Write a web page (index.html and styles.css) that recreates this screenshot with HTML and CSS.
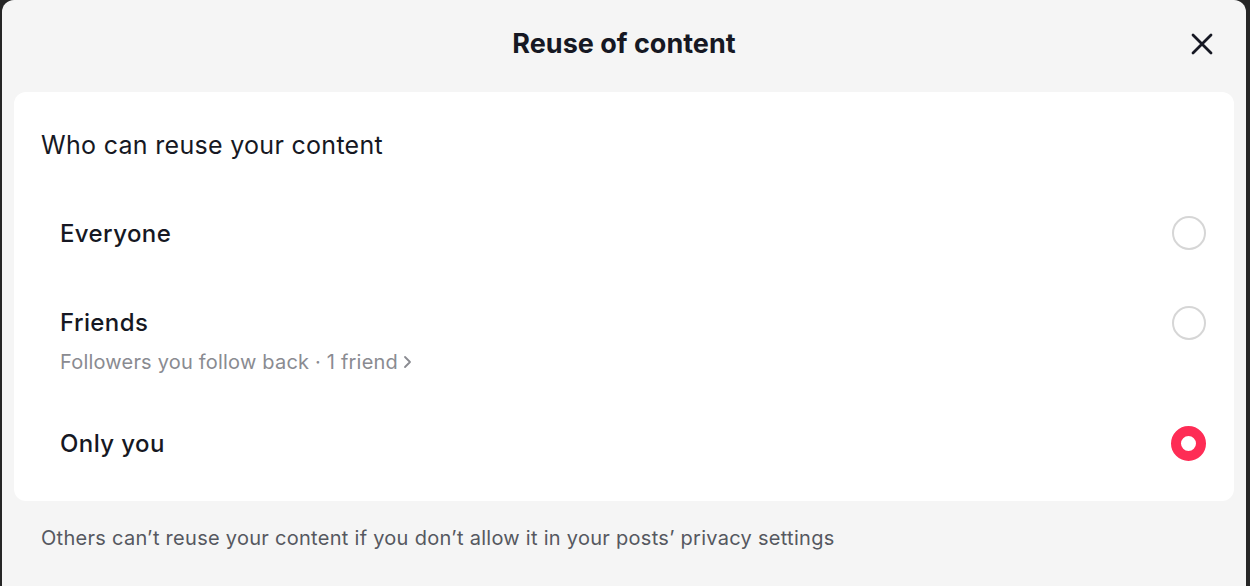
FILE: index.html
```html
<!DOCTYPE html>
<html lang="en">
<head>
<meta charset="utf-8">
<title>Reuse of content</title>
<link rel="stylesheet" href="styles.css">
</head>
<body>
<div class="modal">
  <header class="modal-header">
    <span class="spacer"></span>
    <h1 class="modal-title">Reuse of content</h1>
    <button class="close-btn" aria-label="Close">
      <svg width="22" height="22" viewBox="0 0 22 22" fill="none" stroke="#161823" stroke-width="2.8" stroke-linecap="round">
        <path d="M2 2 L20 20 M20 2 L2 20"/>
      </svg>
    </button>
  </header>
  <section class="card">
    <h2 class="card-heading">Who can reuse your content</h2>
    <div class="option">
      <div class="option-text">
        <div class="option-title">Everyone</div>
      </div>
      <span class="radio"></span>
    </div>
    <div class="option option-sub">
      <div class="option-text">
        <div class="option-title">Friends</div>
        <div class="option-desc">Followers you follow back · 1 friend <svg class="chev" width="9" height="14" viewBox="0 0 9 14" fill="none" stroke="#8a8b91" stroke-width="1.8" stroke-linecap="round" stroke-linejoin="round"><path d="M2 2 L7 7 L2 12"/></svg></div>
      </div>
      <span class="radio"></span>
    </div>
    <div class="option option-last">
      <div class="option-text">
        <div class="option-title">Only you</div>
      </div>
      <span class="radio radio-checked"></span>
    </div>
  </section>
  <p class="footnote">Others can’t reuse your content if you don’t allow it in your posts’ privacy settings</p>
</div>
</body>
</html>
```

FILE: styles.css
```css
html, body {
  margin: 0;
  padding: 0;
  height: 100%;
}
body {
  background: #262626;
  font-family: Inter, "Noto Sans", "Liberation Sans", sans-serif;
  color: #161823;
  overflow: hidden;
}
.modal {
  margin: 0 4px 0 2px;
  height: 586px;
  background: #f5f5f5;
  border-radius: 12px 12px 0 0;
  display: flex;
  flex-direction: column;
}
.modal-header {
  height: 92px;
  flex: none;
  display: grid;
  grid-template-columns: 1fr auto 1fr;
  align-items: center;
  padding: 0 33px;
  box-sizing: border-box;
}
.modal-title {
  margin: 0;
  font-size: 27px;
  font-weight: 700;
  line-height: 30px;
  padding-bottom: 4px;
}
.close-btn {
  justify-self: end;
  border: 0;
  background: none;
  padding: 0;
  width: 22px;
  height: 22px;
  display: flex;
  margin-bottom: 4px;
}
.card {
  margin: 0 12px;
  background: #fff;
  border-radius: 12px;
  padding: 38px 28px 13px 27px;
}
.card-heading {
  margin: 0 0 28px;
  font-size: 25px;
  font-weight: 400;
  letter-spacing: 0.3px;
  line-height: 30px;
}
.option {
  display: flex;
  align-items: center;
  justify-content: space-between;
  padding: 28px 0 28px 19px;
}
.option-sub {
  align-items: flex-start;
  padding-bottom: 23px;
}
.option-last {
  padding-top: 29px;
  padding-bottom: 27px;
}
.option-title {
  font-size: 24px;
  font-weight: 500;
  letter-spacing: 0.4px;
  line-height: 33px;
}
.option-desc {
  margin-top: 11px;
  font-size: 20px;
  letter-spacing: 0.2px;
  line-height: 24px;
  color: #8a8b91;
  display: flex;
  align-items: center;
  gap: 5px;
}
.radio {
  width: 34px;
  height: 34px;
  box-sizing: border-box;
  border: 2px solid #d6d6d6;
  border-radius: 50%;
  flex: none;
}
.radio-checked {
  width: 35px;
  height: 35px;
  border: 10.5px solid #fe2c55;
  background: #fff;
}
.footnote {
  margin: 25px 0 0;
  padding: 0 39px;
  font-size: 20px;
  letter-spacing: 0.28px;
  line-height: 24px;
  color: #555860;
}
```
